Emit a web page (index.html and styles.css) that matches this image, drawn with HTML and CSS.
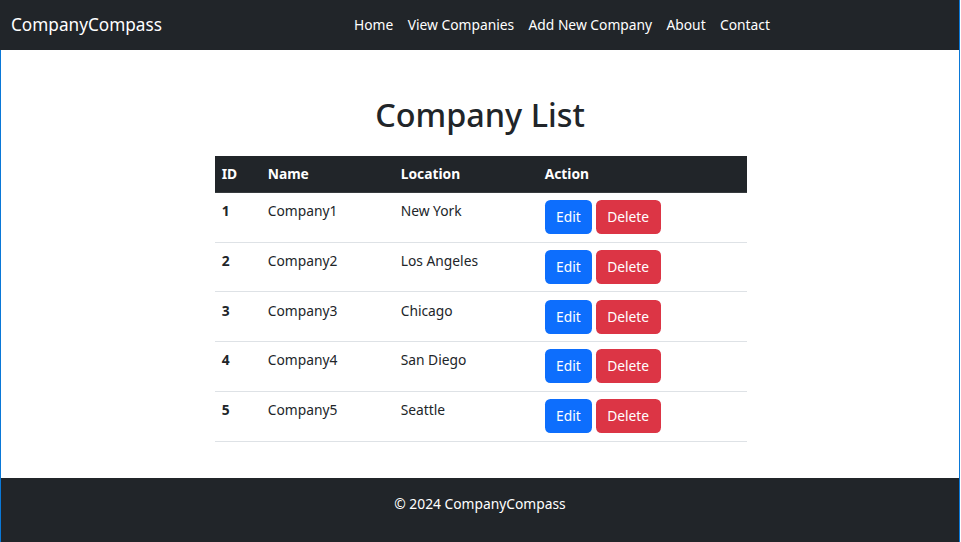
FILE: index.html
```html
<!DOCTYPE html>
<html lang="en">
<head>
<meta charset="utf-8">
<title>CompanyCompass</title>
<link rel="stylesheet" href="styles.css">
</head>
<body>
<div class="window">
  <nav class="navbar">
    <a class="brand" href="#">CompanyCompass</a>
    <ul class="nav">
      <li><a href="#">Home</a></li>
      <li><a href="#">View Companies</a></li>
      <li><a href="#">Add New Company</a></li>
      <li><a href="#">About</a></li>
      <li><a href="#">Contact</a></li>
    </ul>
  </nav>
  <div class="content">
    <main class="main">
      <h1 class="title">Company List</h1>
      <table class="table">
        <thead>
          <tr><th class="c-id">ID</th><th class="c-name">Name</th><th class="c-loc">Location</th><th class="c-act">Action</th></tr>
        </thead>
        <tbody>
          <tr><th>1</th><td>Company1</td><td>New York</td><td><a class="btn btn-edit" href="#">Edit</a> <a class="btn btn-del" href="#">Delete</a></td></tr>
          <tr><th>2</th><td>Company2</td><td>Los Angeles</td><td><a class="btn btn-edit" href="#">Edit</a> <a class="btn btn-del" href="#">Delete</a></td></tr>
          <tr><th>3</th><td>Company3</td><td>Chicago</td><td><a class="btn btn-edit" href="#">Edit</a> <a class="btn btn-del" href="#">Delete</a></td></tr>
          <tr><th>4</th><td>Company4</td><td>San Diego</td><td><a class="btn btn-edit" href="#">Edit</a> <a class="btn btn-del" href="#">Delete</a></td></tr>
          <tr><th>5</th><td>Company5</td><td>Seattle</td><td><a class="btn btn-edit" href="#">Edit</a> <a class="btn btn-del" href="#">Delete</a></td></tr>
        </tbody>
      </table>
    </main>
    <footer class="footer">© 2024 CompanyCompass</footer>
  </div>
</div>
</body>
</html>
```
FILE: styles.css
```css
* { box-sizing: border-box; }
html, body { margin: 0; padding: 0; background: #fff; }
body {
  font-family: "Noto Sans", "Open Sans", sans-serif;
  font-size: 13.8px;
  line-height: 24px;
  color: #212529;
  height: 542px;
  overflow: hidden;
}
.window {
  width: 960px;
  height: 542px;
  border-right: 1px solid #0a78d7;
  display: flex;
  flex-direction: column;
}
.navbar {
  height: 50px;
  background: #212529;
  display: flex;
  align-items: center;
  padding: 0 11px;
  flex-shrink: 0;
}
.brand {
  color: #fff;
  text-decoration: none;
  font-size: 17.2px;
  margin-right: 14px;
}
.nav {
  list-style: none;
  margin: 0;
  padding: 0;
  display: flex;
  flex: 1;
  justify-content: center;
}
.nav a {
  display: block;
  color: #fff;
  text-decoration: none;
  padding: 7px 7.2px;
}
.content {
  flex: 1;
  border-left: 1px solid #0a78d7;
  display: flex;
  flex-direction: column;
}
.main {
  flex: 1;
  display: flex;
  flex-direction: column;
  align-items: center;
  padding-top: 45px;
}
.title {
  font-size: 32.4px;
  font-weight: 500;
  line-height: 1.2;
  margin: 0 0 22px;
}
.table {
  width: 532px;
  border-collapse: collapse;
  margin-left: 1px;
}
.table th, .table td {
  text-align: left;
  vertical-align: top;
  padding: 7.2px;
  line-height: 21.6px;
  border-bottom: 1px solid #dee2e6;
}
.table thead th {
  background: #212529;
  color: #fff;
  font-weight: 700;
  border-bottom: 1px solid #373b3e;
}
.table tbody tr { height: 49.8px; }
.table tbody th { font-weight: 700; }
.c-id { width: 46px; }
.c-name { width: 133px; }
.c-loc { width: 144px; }
.c-act { width: 209px; }
.btn {
  display: inline-block;
  color: #fff;
  text-decoration: none;
  padding: 5px 11.4px;
  border-radius: 5.4px;
  line-height: 24px;
}
.btn-edit { background: #0d6efd; }
.btn-del { background: #dc3545; }
.footer {
  background: #212529;
  color: #fff;
  text-align: center;
  height: 64px;
  padding-top: 14px;
}
```
